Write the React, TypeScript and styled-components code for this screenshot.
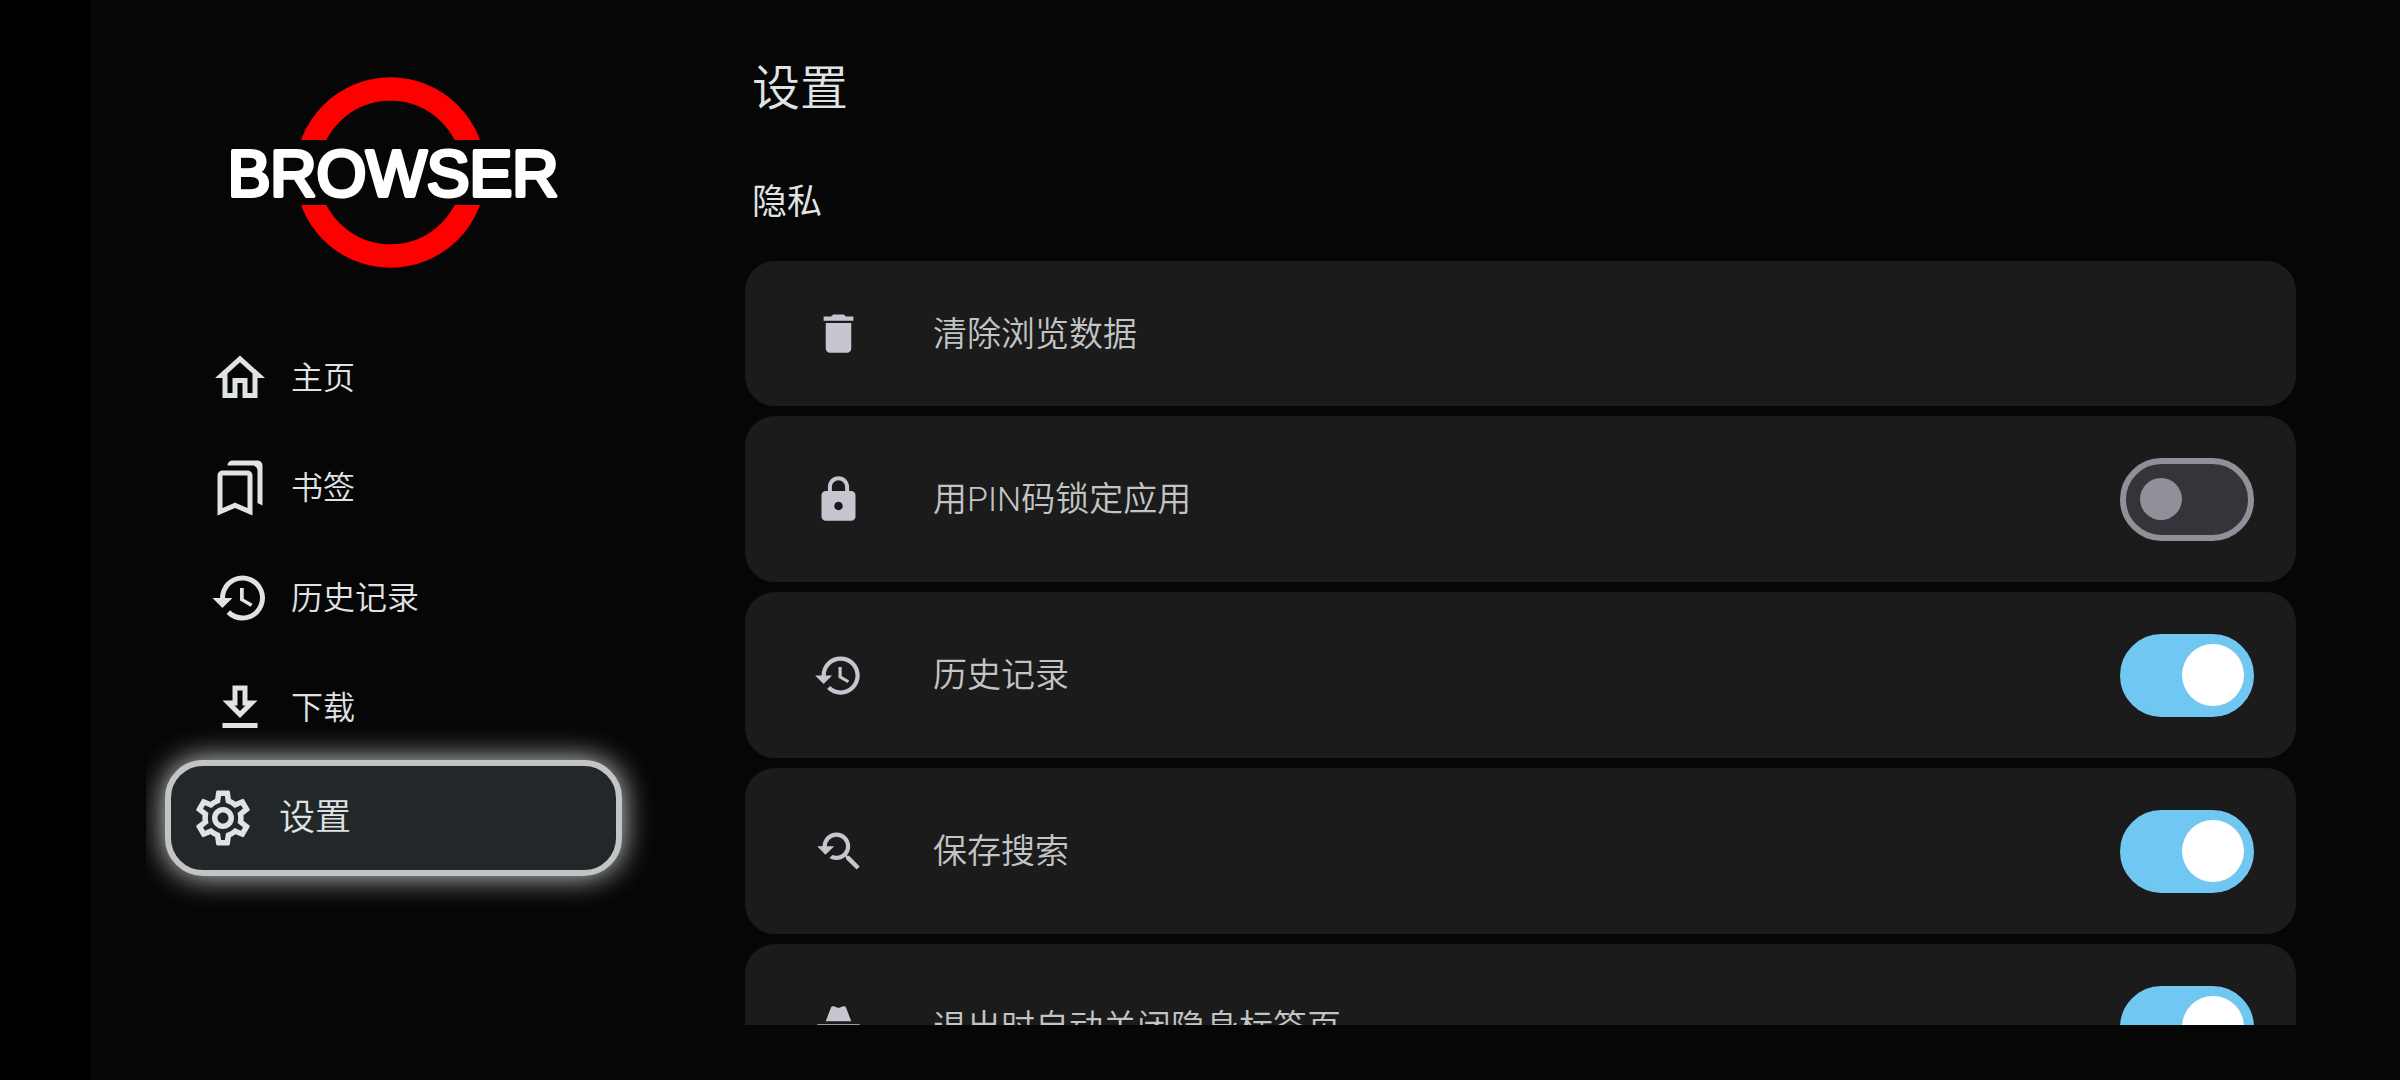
import React, { useState } from "react";
import styled, { createGlobalStyle, css } from "styled-components";
import {
  MdDelete,
  MdHistory,
  MdLock,
  MdOutlineBookmarks,
  MdOutlineHome,
  MdOutlineSettings,
  MdYoutubeSearchedFor,
} from "react-icons/md";

const color = {
  bezel: "#000000",
  page: "#060606",
  card: "#1b1b1b",
  selected: "#22272a",
  outline: "#c2c5c6",
  text: "#e0e3e3",
  rowText: "#c2c5c4",
  rowIcon: "#c9c5d0",
  accent: "#70c7f1",
  trackOff: "#36343b",
  thumbOff: "#938f99",
  logo: "#ff0000",
};

const GlobalStyle = createGlobalStyle`
  *, *::before, *::after { box-sizing: border-box; }
  body {
    margin: 0;
    background: ${color.page};
    color: ${color.text};
    font-family: Roboto, "Noto Sans CJK SC", sans-serif;
    font-weight: 350;
  }
`;

const Shell = styled.div`
  display: flex;
  height: 100vh;
  overflow: hidden;
  border-left: 91px solid ${color.bezel};
  background: ${color.page};
`;

const Sidebar = styled.aside`
  flex: none;
  display: flex;
  flex-direction: column;
  align-items: center;
  width: 599px;
  margin-left: 55px;
  padding: 76px 144px 0 40px;
  overflow: hidden;
`;

const Logo = styled.svg`
  flex: none;
  width: 344px;
  height: 192px;
  margin-bottom: 55px;
`;

const LogoText = styled.text`
  font-family: "Liberation Sans", sans-serif;
  font-size: 64px;
  font-weight: 400;
  fill: #ffffff;
  stroke: #ffffff;
  stroke-width: 4px;
  stroke-linejoin: round;
`;

const NavList = styled.ul`
  align-self: stretch;
  margin: 0;
  padding: 0;
  list-style: none;
`;

const NavItem = styled.li`
  display: flex;
  flex-direction: column;
  justify-content: center;
  height: 110px;
`;

const NavLink = styled.a<{ $selected: boolean }>`
  flex: none;
  display: flex;
  align-items: center;
  height: 110px;
  gap: 21px;
  padding: 0 24px;
  color: ${color.text};
  font-size: 32px;
  line-height: 40px;
  text-decoration: none;

  svg {
    flex: none;
    width: 60px;
    height: 60px;
  }

  ${(p) =>
    p.$selected &&
    css`
      height: 116px;
      gap: 23px;
      margin: 0 -21px;
      padding: 0 19px;
      border: 6px solid ${color.outline};
      border-radius: 38px;
      background: ${color.selected};
      box-shadow: 0 0 30px rgba(255, 255, 255, 0.85);
      font-size: 36px;

      svg {
        width: 66px;
        height: 66px;
      }
    `}
`;

const Main = styled.main`
  flex: 1;
  min-width: 0;
  display: flex;
  flex-direction: column;
  padding: 57px 104px 55px 0;
`;

const Title = styled.h1`
  margin: 0;
  padding-left: 7px;
  font-size: 48px;
  font-weight: 350;
  line-height: 64px;
`;

const SectionTitle = styled.h2`
  margin: 58px 0 34px;
  padding-left: 7px;
  font-size: 35px;
  font-weight: 400;
  line-height: 48px;
`;

const Rows = styled.div`
  flex: 1;
  min-height: 0;
  display: flex;
  flex-direction: column;
  gap: 10px;
  overflow: auto;
  scrollbar-width: none;
`;

const rowStyle = css`
  flex: none;
  display: flex;
  align-items: center;
  width: 100%;
  padding: 0 42px 0 68px;
  border: 0;
  border-radius: 30px;
  background: ${color.card};
  color: ${color.rowText};
  font: inherit;
  font-size: 34px;
  line-height: 44px;
  text-align: left;
  cursor: pointer;

  > svg {
    flex: none;
    width: 51px;
    height: 51px;
    margin-right: 69px;
    color: ${color.rowIcon};
  }
`;

const ActionRow = styled.button`
  ${rowStyle}
  height: 145px;
`;

const ToggleRow = styled.label`
  ${rowStyle}
  height: 166px;
`;

const RowText = styled.span`
  flex: 1;
`;

const Switch = styled.input`
  appearance: none;
  flex: none;
  display: flex;
  align-items: center;
  width: 134px;
  height: 83px;
  margin: 0;
  padding: 0 14px;
  border: 6px solid ${color.thumbOff};
  border-radius: 42px;
  background: ${color.trackOff};
  cursor: pointer;

  &::before {
    content: "";
    width: 42px;
    height: 42px;
    border-radius: 50%;
    background: ${color.thumbOff};
  }

  &:checked {
    justify-content: flex-end;
    padding: 0 4px;
    border-color: ${color.accent};
    background: ${color.accent};
  }

  &:checked::before {
    width: 62px;
    height: 62px;
    background: #ffffff;
  }
`;

function DownloadIcon() {
  return (
    <svg viewBox="0 0 24 24" fill="currentColor" aria-hidden="true">
      <path d="M13 5v6h1.17L12 13.17 9.83 11H11V5h2m2-2H9v6H5l7 7 7-7h-4V3zm4 15H5v2h14v-2z" />
    </svg>
  );
}

function IncognitoIcon() {
  return (
    <svg viewBox="0 0 24 24" fill="currentColor" aria-hidden="true">
      <path d="M17.06 13C15.2 13 13.64 14.33 13.24 16.1C12.29 15.69 11.42 15.8 10.76 16.09C10.35 14.31 8.79 13 6.94 13C4.77 13 3 14.79 3 17C3 19.21 4.77 21 6.94 21C9 21 10.68 19.38 10.84 17.32C11.18 17.08 12.07 16.63 13.16 17.34C13.34 19.39 15 21 17.06 21C19.23 21 21 19.21 21 17C21 14.79 19.23 13 17.06 13M6.94 19.86C5.38 19.86 4.13 18.58 4.13 17S5.39 14.14 6.94 14.14C8.5 14.14 9.75 15.42 9.75 17S8.5 19.86 6.94 19.86M17.06 19.86C15.5 19.86 14.25 18.58 14.25 17S15.5 14.14 17.06 14.14C18.62 14.14 19.88 15.42 19.88 17S18.61 19.86 17.06 19.86M22 10.5H2V12H22V10.5M15.53 2.63C15.31 2.14 14.75 1.88 14.22 2.05L12 2.79L9.77 2.05L9.72 2.04C9.19 1.89 8.63 2.17 8.43 2.68L6 9H18L15.56 2.68C15.55 2.66 15.54 2.65 15.53 2.63Z" />
    </svg>
  );
}

function BrowserLogo() {
  return (
    <Logo viewBox="0 0 344 192" role="img" aria-label="BROWSER">
      <defs>
        <clipPath id="ring-halves">
          <rect x="0" y="0" width="344" height="64" />
          <rect x="0" y="129" width="344" height="63" />
        </clipPath>
      </defs>
      <circle
        cx="168.5"
        cy="96.5"
        r="83.5"
        fill="none"
        stroke={color.logo}
        strokeWidth="23.5"
        clipPath="url(#ring-halves)"
      />
      <LogoText x="171" y="120" textAnchor="middle">
        BROWSER
      </LogoText>
    </Logo>
  );
}

interface NavEntry {
  id: string;
  label: string;
  Icon: React.ComponentType;
}

const navEntries: NavEntry[] = [
  { id: "home", label: "主页", Icon: MdOutlineHome },
  { id: "bookmarks", label: "书签", Icon: MdOutlineBookmarks },
  { id: "history", label: "历史记录", Icon: MdHistory },
  { id: "downloads", label: "下载", Icon: DownloadIcon },
  { id: "settings", label: "设置", Icon: MdOutlineSettings },
];

interface ToggleEntry {
  id: string;
  label: string;
  Icon: React.ComponentType;
  on: boolean;
}

const toggleEntries: ToggleEntry[] = [
  { id: "pin-lock", label: "用PIN码锁定应用", Icon: MdLock, on: false },
  { id: "keep-history", label: "历史记录", Icon: MdHistory, on: true },
  { id: "save-searches", label: "保存搜索", Icon: MdYoutubeSearchedFor, on: true },
  { id: "close-incognito", label: "退出时自动关闭隐身标签页", Icon: IncognitoIcon, on: true },
];

function ToggleSetting({ id, label, Icon, on }: ToggleEntry) {
  const [checked, setChecked] = useState(on);
  return (
    <ToggleRow htmlFor={id}>
      <Icon />
      <RowText>{label}</RowText>
      <Switch
        id={id}
        type="checkbox"
        role="switch"
        checked={checked}
        onChange={(e) => setChecked(e.target.checked)}
      />
    </ToggleRow>
  );
}

export default function App() {
  const [current, setCurrent] = useState("settings");
  return (
    <>
      <GlobalStyle />
      <Shell lang="zh-CN">
        <Sidebar>
          <BrowserLogo />
          <NavList>
            {navEntries.map(({ id, label, Icon }) => (
              <NavItem key={id}>
                <NavLink
                  href={`#${id}`}
                  $selected={id === current}
                  aria-current={id === current ? "page" : undefined}
                  onClick={() => setCurrent(id)}
                >
                  <Icon />
                  {label}
                </NavLink>
              </NavItem>
            ))}
          </NavList>
        </Sidebar>
        <Main>
          <Title>设置</Title>
          <SectionTitle>隐私</SectionTitle>
          <Rows>
            <ActionRow type="button">
              <MdDelete />
              <RowText>清除浏览数据</RowText>
            </ActionRow>
            {toggleEntries.map((entry) => (
              <ToggleSetting key={entry.id} {...entry} />
            ))}
          </Rows>
        </Main>
      </Shell>
    </>
  );
}
